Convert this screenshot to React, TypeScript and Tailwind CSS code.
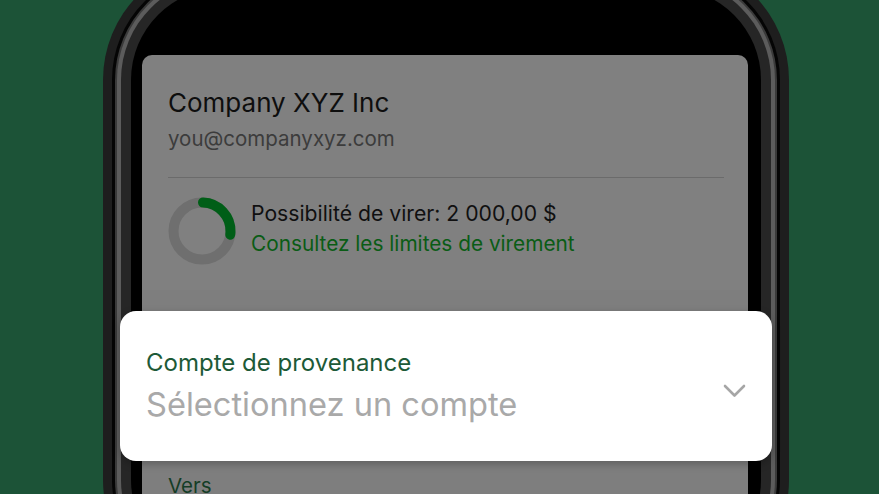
import React from 'react';

function LimitRing() {
  const r = 28.5;
  const c = 2 * Math.PI * r;
  const part = 0.265;
  return (
    <svg width="68" height="68" viewBox="0 0 68 68" className="shrink-0">
      <circle cx="34" cy="34" r={r} fill="none" stroke="#6f6f6f" strokeWidth="10" />
      <circle
        cx="34"
        cy="34"
        r={r}
        fill="none"
        stroke="#005e17"
        strokeWidth="10"
        strokeLinecap="round"
        strokeDasharray={`${c * part} ${c}`}
        transform="rotate(-88 34 34)"
      />
    </svg>
  );
}

function Chevron() {
  return (
    <svg width="25" height="14" viewBox="0 0 25 14" fill="none">
      <path d="M3 2 L12.5 11.5 L22 2" stroke="#a6a6a6" strokeWidth="2.6" strokeLinecap="round" strokeLinejoin="round" />
    </svg>
  );
}

export default function App() {
  return (
    <div
      className="relative w-[879px] h-[494px] overflow-hidden bg-[#1c5337]"
      style={{ fontFamily: 'Inter, "Noto Sans", sans-serif' }}
    >
      {/* phone frame */}
      <div className="ml-[103px] mt-[-40px] w-[686px] h-[640px] rounded-[120px] bg-[#1e1e1e] p-[9px]">
        <div className="h-full rounded-[111px] bg-[#050505] p-[3px]">
          <div className="h-full rounded-[108px] bg-[#3a3a3a] p-[2px]">
            <div className="h-full rounded-[106px] bg-[#5c5c5c] p-[4px]">
              <div className="h-full rounded-[102px] bg-[#262626] p-[10px]">
                <div className="h-full rounded-[92px] bg-black pl-[11px] pr-[13px] pt-[67px]">
                  {/* screen (dimmed by sheet overlay) */}
                  <div className="h-full rounded-t-[10px] bg-[#808080] pl-[26px] pr-[24px] pt-[32px]">
                    <div className="text-[26px] leading-[32px] text-[#0e0e0e]">Company XYZ Inc</div>
                    <div className="mt-[7px] text-[20.5px] leading-[26px] text-[#3c3c3c]">you@companyxyz.com</div>
                    <div className="mt-[25px] h-px bg-[#6b6b6b]" />
                    <div className="mt-[19px] flex items-start gap-[15px] pb-[25px]">
                      <LimitRing />
                      <div className="mt-[3px] flex flex-col gap-[5px]">
                        <div className="text-[21.2px] leading-[26px] text-[#101010]">Possibilité de virer: 2 000,00 $</div>
                        <div className="text-[20.8px] leading-[26px] text-[#0a5c15]">Consultez les limites de virement</div>
                      </div>
                    </div>
                    <div className="-ml-[26px] -mr-[24px] h-[220px] bg-[#7e7e7e] pl-[26px] pt-[183px]">
                      <div className="text-[20.5px] leading-[26px] text-[#143d26]">Vers</div>
                    </div>
                  </div>
                </div>
              </div>
            </div>
          </div>
        </div>
      </div>

      {/* account picker sheet */}
      <div className="absolute left-[120px] top-[311px] flex h-[150px] w-[652px] items-center justify-between rounded-[16px] bg-white pl-[26px] pr-[25px] shadow-[0_3px_8px_rgba(0,0,0,0.25)]">
        <div className="flex flex-col">
          <div className="text-[24px] leading-[30px] text-[#1d5a37]">Compte de provenance</div>
          <div className="mt-[6px] text-[32.6px] leading-[40px] text-[#a9a9a9]">Sélectionnez un compte</div>
        </div>
        <div className="mt-[10px]">
          <Chevron />
        </div>
      </div>
    </div>
  );
}
